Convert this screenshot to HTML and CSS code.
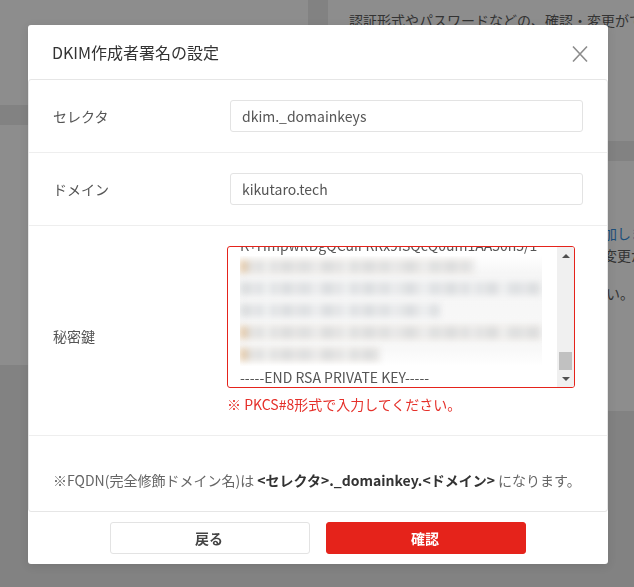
FILE: index.html
```html
<!DOCTYPE html>
<html lang="ja">
<head>
<meta charset="utf-8">
<title>DKIM作成者署名の設定</title>
<link rel="stylesheet" href="styles.css">
</head>
<body>
<div class="page">
  <div class="col-left">
    <div class="card c1"></div>
    <div class="card c2"></div>
  </div>
  <div class="col-right">
    <div class="card r1"><p class="bgtext">認証形式やパスワードなどの、確認・変更ができ</p></div>
    <div class="card r2">
      <p class="bgtext blue">加しま</p>
      <p class="bgtext">変更が</p>
      <p class="bgtext gap">い。</p>
    </div>
  </div>
</div>
<div class="modal">
  <header class="modal-head">
    <h1>DKIM作成者署名の設定</h1>
    <svg class="close" width="16" height="18" viewBox="0 0 16 18"><path d="M1 1.5L15 16.5M15 1.5L1 16.5" stroke="#8c8c8c" stroke-width="1.6" fill="none"/></svg>
  </header>
  <div class="modal-body">
    <div class="row r-sel">
      <div class="label">セレクタ</div>
      <div class="input">dkim._domainkeys</div>
    </div>
    <div class="row r-dom">
      <div class="label">ドメイン</div>
      <div class="input">kikutaro.tech</div>
    </div>
    <div class="row r-key">
      <div class="label key-label">秘密鍵</div>
      <div class="keycol">
        <div class="textarea">
          <div class="ta-text">
            <div class="cut"><span>K+HmpwRDgQCuiFRRx9ISQcQ0um1AA50h5/1</span></div>
            <div class="blurred">
              <span class="bl b1"></span><span class="bl b2"></span><span class="bl b3"></span><span class="bl b4"></span><span class="bl b5"></span>
            </div>
            <div class="endline">-----END RSA PRIVATE KEY-----</div>
          </div>
          <div class="scrollbar">
            <span class="arrow up"></span>
            <span class="track"><span class="thumb"></span></span>
            <span class="arrow down"></span>
          </div>
        </div>
        <p class="err">※ PKCS#8形式で入力してください。</p>
      </div>
    </div>
    <div class="note">※FQDN(完全修飾ドメイン名)は <b>&lt;セレクタ&gt;._domainkey.&lt;ドメイン&gt;</b> になります。</div>
  </div>
  <footer class="modal-foot">
    <button class="btn back">戻る</button>
    <button class="btn ok">確認</button>
  </footer>
</div>
</body>
</html>
```
FILE: styles.css
```css
* { box-sizing: border-box; }
html, body { margin: 0; height: 100%; }
body {
  font-family: "Noto Sans CJK JP", "Noto Sans", sans-serif;
  background: #808080;
  overflow: hidden;
  color: #555;
}
.page { display: flex; gap: 20px; height: 587px; width: 634px; background: #828282; }
.col-left { width: 308px; flex: none; display: flex; flex-direction: column; gap: 20px; }
.col-right { flex: 1; min-width: 0; display: flex; flex-direction: column; gap: 20px; }
.card { background: #8d8d8d; overflow: hidden; }
.c1 { height: 105px; }
.c2 { height: 240px; }
.r1 { height: 141px; padding: 9px 0 0 21px; }
.r2 { height: 250px; padding: 61px 0 0 275px; }
.bgtext { margin: 0; font-size: 14px; line-height: 22px; white-space: nowrap; color: #333; }
.blue { color: #1d4f7a; }
.gap { margin-top: 16px; padding-left: 3px; }
.modal {
  position: fixed; left: 28px; top: 25px; width: 580px; height: 539px;
  background: #fff; border-radius: 3px; display: flex; flex-direction: column;
  box-shadow: 0 2px 10px rgba(0,0,0,.1);
}
.modal-head { height: 54px; flex: none; display: flex; align-items: center; justify-content: space-between; padding: 3px 20px 0 24px; }
.modal-head h1 { margin: 0 0 3px; font-size: 16px; font-weight: 400; color: #333; line-height: 24px; }
.close { display: block; }
.modal-body { height: 433px; flex: none; border: 1px solid #e6e6e6; border-radius: 3px; display: flex; flex-direction: column; }
.row { display: flex; align-items: center; border-bottom: 1px solid #eee; padding-left: 24px; }
.r-sel { height: 73px; }
.r-dom { height: 73px; }
.r-key { height: 210px; }
.label { width: 177px; flex: none; font-size: 14px; color: #555; }
.key-label { margin-top: 11px; }
.input { width: 353px; height: 32px; border: 1px solid #e3e3e3; border-radius: 3px; padding: 0 11px; font-size: 14px; line-height: 30px; color: #555; background: #fff; }
.keycol { margin-left: -3px; align-self: flex-start; padding-top: 20px; }
.textarea { width: 348px; height: 142px; border: 1px solid #e5231b; border-radius: 3px; display: flex; overflow: hidden; }
.ta-text { flex: 1; min-width: 0; padding-left: 12px; font-size: 14px; line-height: 22px; color: #555; display: flex; flex-direction: column; overflow: hidden; }
.cut { height: 9px; flex: none; display: flex; align-items: flex-end; white-space: nowrap; }
.cut span { display: block; flex: none; }
.blurred { height: 110px; width: 302px; display: flex; flex-direction: column; flex: none; gap: 9px; padding-top: 4px; background: linear-gradient(180deg, #fff, #f6f6f6 15%, #f8f8f8 85%, #fff); overflow: hidden; }
.bl {
  display: block; height: 13px; filter: blur(3px); flex: none;
  background:
    repeating-linear-gradient(90deg, transparent 0 23px, rgba(255,255,255,.45) 23px 31px, transparent 31px 71px, rgba(255,255,255,.35) 71px 79px),
    repeating-linear-gradient(90deg, #dcdee0 0 11px, #e6e7e8 11px 17px, #dfe1e3 17px 37px, #e9eaeb 37px 41px);
}
.b1, .b4, .b5 { box-shadow: inset 8px 0 6px -2px #e6c59c; }
.b1 { width: 235px; }
.b2 { width: 302px; }
.b3 { width: 200px; }
.b4 { width: 302px; }
.b5 { width: 140px; }
.endline { white-space: nowrap; }
.scrollbar { width: 17px; flex: none; background: #f0f0f0; display: flex; flex-direction: column; align-items: center; }
.arrow { height: 17px; width: 17px; flex: none; display: flex; align-items: center; justify-content: center; }
.arrow::before { content: ""; border-left: 4px solid transparent; border-right: 4px solid transparent; }
.up::before { border-bottom: 4px solid #505050; }
.down::before { border-top: 4px solid #505050; }
.track { flex: 1; width: 100%; display: flex; flex-direction: column; justify-content: flex-end; }
.thumb { display: block; height: 18px; width: 13px; margin: 0 auto; background: #c1c1c1; }
.err { margin: 4px 0 0; font-size: 14px; line-height: 24px; color: #e5302a; }
.note { flex: 1; display: flex; align-items: center; white-space: pre; padding: 12px 0 0 24px; font-size: 14px; color: #666; }
.note b { color: #333; font-weight: 700; }
.modal-foot { flex: 1; display: flex; justify-content: center; gap: 16px; padding-top: 10px; }
.btn { width: 200px; height: 32px; border-radius: 3px; font: 700 14px "Noto Sans CJK JP", sans-serif; border: 1px solid #e3e3e3; background: #fff; color: #444; padding: 0 2px 0 0; }
.ok { background: #e5231b; border-color: #e5231b; color: #fff; }
```
